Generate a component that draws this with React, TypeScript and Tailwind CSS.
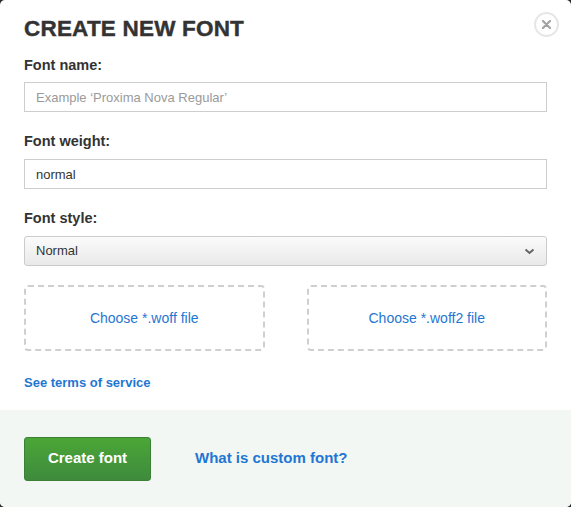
import React from 'react';

const font = { fontFamily: '"Liberation Sans", Arial, sans-serif' };

const DropBox: React.FC<{ label: string }> = ({ label }) => (
  <button className="flex-1 h-[66px] flex items-center justify-center rounded-[4px] border-2 border-dashed border-[#cfcfcf] text-[14px] text-[#1f76d3] bg-white">
    {label}
  </button>
);

export default function App() {
  return (
    <div className="w-[571px] h-[507px] bg-[#2a2a2a] overflow-hidden" style={font}>
      <div className="relative w-full h-full bg-white rounded-[5px] overflow-hidden flex flex-col">
        <button className="absolute top-[12px] right-[12px] w-[25px] h-[25px] rounded-full border-2 border-[#e6e6e6] flex items-center justify-center">
          <svg width="9" height="9" viewBox="0 0 9 9">
            <path d="M1 1L8 8M8 1L1 8" stroke="#a3a3a3" strokeWidth="2.2" strokeLinecap="round" />
          </svg>
        </button>

        <div className="px-6 pt-[14px] flex flex-col">
          <h2 className="text-[22.5px] font-bold text-[#333] tracking-[0.2px] leading-[30px] [-webkit-text-stroke:0.4px_#333]">CREATE NEW FONT</h2>

          <label className="mt-[12px] text-[14.5px] font-bold text-[#333] leading-[18px]">Font name:</label>
          <input
            className="mt-[8px] h-[30px] border border-[#cdcdcd] px-[11px] text-[13px] text-[#333] placeholder-[#9a9a9a] outline-none"
            placeholder="Example ‘Proxima Nova Regular’"
          />

          <label className="mt-[20px] text-[14.5px] font-bold text-[#333] leading-[18px]">Font weight:</label>
          <input
            className="mt-[9px] h-[30px] border border-[#cdcdcd] px-[11px] text-[13px] text-[#333] outline-none"
            defaultValue="normal"
          />

          <label className="mt-[20px] text-[14.5px] font-bold text-[#333] leading-[18px]">Font style:</label>
          <div className="mt-[9px] h-[30px] border border-[#cbcbcb] rounded-[3px] bg-gradient-to-b from-[#fbfbfb] to-[#e9e9e9] flex items-center justify-between px-[11px] text-[13px] text-[#333]">
            <span>Normal</span>
            <svg width="11" height="7" viewBox="0 0 11 7">
              <path d="M1.5 1.5L5.5 5L9.5 1.5" fill="none" stroke="#666" strokeWidth="2" />
            </svg>
          </div>

          <div className="mt-[19px] flex gap-[42px]">
            <DropBox label="Choose *.woff file" />
            <DropBox label="Choose *.woff2 file" />
          </div>

          <a className="mt-[24px] text-[13px] font-bold text-[#1f76d3] leading-[16px]">See terms of service</a>
        </div>

        <div className="mt-auto h-[97px] bg-[#f3f7f3] flex items-center px-6 gap-[44px]">
          <button className="w-[127px] h-[44px] rounded-[3px] bg-gradient-to-b from-[#4ba636] to-[#3e8b3c] border border-[#3b8036] text-white text-[15px] font-bold">
            Create font
          </button>
          <a className="text-[15px] font-bold text-[#1f76d3]">What is custom font?</a>
        </div>
      </div>
    </div>
  );
}
